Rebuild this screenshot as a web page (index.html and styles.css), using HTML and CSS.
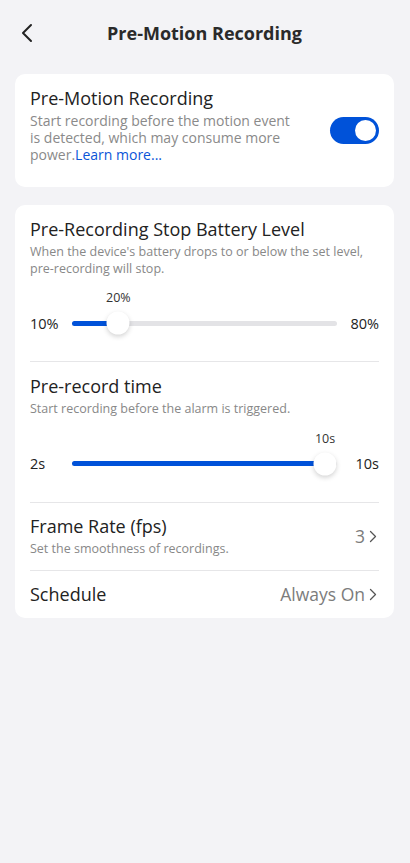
FILE: index.html
```html
<!DOCTYPE html>
<html>
<head>
<meta charset="utf-8">
<link rel="stylesheet" href="styles.css">
</head>
<body>
<div class="page">
  <header class="topbar">
    <svg class="back" width="14" height="20" viewBox="0 0 14 20"><path d="M11 2 L3 10 L11 18" fill="none" stroke="#222" stroke-width="2" stroke-linecap="round" stroke-linejoin="round"/></svg>
    <h1 class="title">Pre-Motion Recording</h1>
  </header>

  <section class="card card-toggle">
    <div class="toggle-text">
      <div class="item-title">Pre-Motion Recording</div>
      <div class="item-desc lg">Start recording before the motion event is detected, which may consume more power.<span class="link">Learn more...</span></div>
    </div>
    <div class="switch"><div class="knob"></div></div>
  </section>

  <section class="card card-list">
    <div class="block">
      <div class="item-title">Pre-Recording Stop Battery Level</div>
      <div class="item-desc">When the device's battery drops to or below the set level, pre-recording will stop.</div>
      <div class="slider">
        <div class="label-row"><span class="end"></span><div class="label-track"><span class="value-label" style="left: 17.5%">20%</span></div><span class="end"></span></div>
        <div class="slider-row">
          <span class="end">10%</span>
          <div class="track"><div class="fill" style="width: 17.5%"></div><div class="thumb" style="left: 17.5%"></div></div>
          <span class="end right">80%</span>
        </div>
      </div>
    </div>
    <div class="block">
      <div class="item-title">Pre-record time</div>
      <div class="item-desc">Start recording before the alarm is triggered.</div>
      <div class="slider">
        <div class="label-row"><span class="end"></span><div class="label-track"><span class="value-label" style="left: 95.5%">10s</span></div><span class="end"></span></div>
        <div class="slider-row">
          <span class="end">2s</span>
          <div class="track"><div class="fill" style="width: 95.5%"></div><div class="thumb" style="left: 95.5%"></div></div>
          <span class="end right">10s</span>
        </div>
      </div>
    </div>
    <div class="row frame">
      <div>
        <div class="item-title">Frame Rate (fps)</div>
        <div class="item-desc">Set the smoothness of recordings.</div>
      </div>
      <div class="row-value">3<svg class="chev" width="8" height="13" viewBox="0 0 8 13"><path d="M1.5 1.5 L6.5 6.5 L1.5 11.5" fill="none" stroke="#555" stroke-width="1.3" stroke-linecap="round" stroke-linejoin="round"/></svg></div>
    </div>
    <div class="row schedule">
      <div class="item-title">Schedule</div>
      <div class="row-value">Always On<svg class="chev" width="8" height="13" viewBox="0 0 8 13"><path d="M1.5 1.5 L6.5 6.5 L1.5 11.5" fill="none" stroke="#555" stroke-width="1.3" stroke-linecap="round" stroke-linejoin="round"/></svg></div>
    </div>
  </section>
</div>
</body>
</html>
```

FILE: styles.css
```css
* { box-sizing: border-box; }
html, body { margin: 0; padding: 0; }
body {
  background: #f3f3f6;
  font-family: "Open Sans", "Noto Sans", "Liberation Sans", sans-serif;
  color: #222;
  width: 410px;
  min-height: 863px;
  overflow: hidden;
}
.page { padding: 0 16px 0 15px; }
.topbar {
  height: 66px;
  display: flex;
  align-items: center;
  justify-content: center;
  position: relative;
}
.back { position: absolute; left: 5px; top: 23px; }
.title {
  margin: 0;
  font-size: 18px;
  font-weight: 700;
  color: #2a2a2a;
}
.card {
  background: #fff;
  border-radius: 10px;
  margin-top: 8px;
}
.card-toggle {
  height: 113px;
  padding: 12px 15px 0 15px;
  display: flex;
  align-items: flex-start;
  justify-content: space-between;
}
.toggle-text { width: 262px; }
.item-title {
  font-size: 18px;
  line-height: 24px;
  color: #222;
  font-weight: 400;
}
.item-desc {
  font-size: 12.5px;
  line-height: 16.5px;
  color: #888;
  margin-top: 3px;
}
.item-desc.lg { font-size: 14px; line-height: 17px; color: #8a8a8a; margin-top: 2px; }
.link { color: #0a55d8; }
.switch {
  margin-top: 31px;
  width: 49px;
  height: 27px;
  border-radius: 14px;
  background: #0052d9;
  position: relative;
}
.knob {
  position: absolute;
  right: 3px;
  top: 3px;
  width: 21px;
  height: 21px;
  border-radius: 50%;
  background: #fff;
}
.card-list {
  margin-top: 18px;
  padding: 0 15px;
}
.block {
  border-bottom: 1px solid #e6e6e8;
  padding-top: 12px;
}
.slider { padding-top: 13px; padding-bottom: 26px; }
.label-row, .slider-row { display: flex; align-items: center; }
.label-row { height: 16px; }
.slider-row { height: 24px; margin-top: 5px; }
.end { width: 42px; flex: none; font-size: 14.5px; color: #222; }
.end.right { text-align: right; }
.label-track { flex: 1; position: relative; height: 16px; }
.value-label {
  position: absolute;
  top: 0;
  line-height: 16px;
  font-size: 12.5px;
  color: #333;
  transform: translateX(-50%);
  white-space: nowrap;
}
.track {
  flex: 1;
  height: 5px;
  border-radius: 3px;
  background: #e3e3e6;
  position: relative;
}
.fill {
  position: absolute;
  left: 0; top: 0; bottom: 0;
  background: #0052d9;
  border-radius: 3px;
}
.thumb {
  position: absolute;
  top: 50%;
  width: 23px;
  height: 23px;
  border-radius: 50%;
  background: #fff;
  transform: translate(-50%, -50%);
  box-shadow: 0 2px 5px rgba(0,0,0,0.18);
}
.row {
  display: flex;
  align-items: center;
  justify-content: space-between;
}
.row.frame { height: 68px; border-bottom: 1px solid #e6e6e8; }
.row.frame .item-desc { margin-top: 3px; }
.row.schedule { height: 47px; }
.row-value {
  font-size: 17.5px;
  color: #7c7c7c;
  display: flex;
  align-items: center;
  gap: 4px;
}
.chev { margin-right: 2px; }
```
